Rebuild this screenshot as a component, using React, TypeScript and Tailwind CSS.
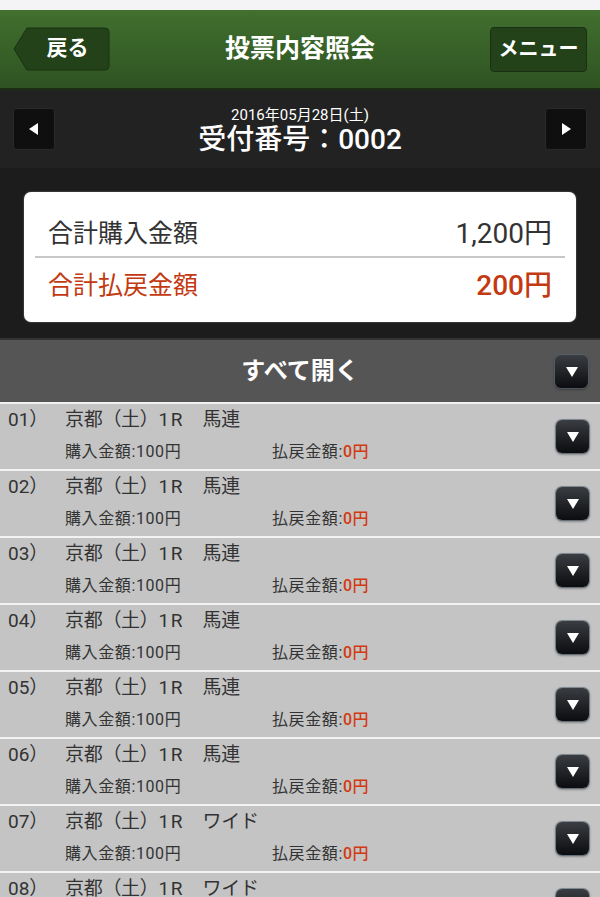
import React from "react";

const rows = [
  { no: "01", bet: "馬連" },
  { no: "02", bet: "馬連" },
  { no: "03", bet: "馬連" },
  { no: "04", bet: "馬連" },
  { no: "05", bet: "馬連" },
  { no: "06", bet: "馬連" },
  { no: "07", bet: "ワイド" },
  { no: "08", bet: "ワイド" },
];

const font = { fontFamily: '"Roboto", "Noto Sans CJK JP", sans-serif' };

const DownButton = () => (
  <div className="flex size-[33px] items-center justify-center rounded-[6px] bg-gradient-to-b from-[#3a3d42] to-[#0c0d10] shadow-[0_1px_3px_rgba(0,0,0,0.6)] ring-1 ring-[#5a6a7a]/60">
    <svg width="16" height="14" viewBox="0 0 16 14">
      <path d="M2 2h12L8 12z" fill="#fff" />
    </svg>
  </div>
);

const ArrowButton = ({ dir }: { dir: "left" | "right" }) => (
  <div className="flex h-[42px] w-[42px] items-center justify-center rounded-[4px] bg-[#0f0f0f] shadow-[inset_0_0_0_1px_#2a2a2a]">
    <svg width="14" height="14" viewBox="0 0 14 14">
      {dir === "left" ? <path d="M11 1v12L2 7z" fill="#fff" /> : <path d="M3 1v12l9-6z" fill="#fff" />}
    </svg>
  </div>
);

export default function App() {
  return (
    <div className="h-[897px] w-[600px] overflow-hidden bg-[#1c1c1c]" style={font}>
      <div className="h-[10px] bg-[#f4f4f6]" />
      {/* header */}
      <div className="flex h-[80px] items-center justify-between border-b-2 border-[#1e2e16] bg-gradient-to-b from-[#41702f] to-[#2f5322] px-[13px]">
        <div className="relative flex h-[44px] w-[97px] items-center justify-center">
          <svg className="absolute inset-0" width="97" height="44" viewBox="0 0 97 44">
            <path d="M14 1H92a4 4 0 0 1 4 4V39a4 4 0 0 1-4 4H14L1 22z" fill="#24421a" stroke="#1a3012" />
          </svg>
          <span className="relative pl-3 text-[21px] font-bold text-white">戻る</span>
        </div>
        <span className="text-[25px] font-bold text-white">投票内容照会</span>
        <div className="flex h-[45px] w-[97px] items-center justify-center rounded-[4px] border border-[#1a3012] bg-[#24421a]">
          <span className="text-[20px] font-bold text-white">メニュー</span>
        </div>
      </div>
      {/* number bar */}
      <div className="flex h-[78px] items-center justify-between bg-[#222222] px-[13px] shadow-[0_2px_3px_rgba(0,0,0,0.5)]">
        <ArrowButton dir="left" />
        <div className="flex flex-col items-center leading-none text-white">
          <span className="mt-[4px] text-[15px]">2016年05月28日(土)</span>
          <span className="mt-[3px] text-[28px] font-medium">受付番号：0002</span>
        </div>
        <ArrowButton dir="right" />
      </div>
      {/* totals */}
      <div className="bg-[#1c1c1c] px-[24px] pt-[24px] pb-[16px]">
        <div className="rounded-[7px] bg-white px-[11px] shadow-[0_0_2px_rgba(255,255,255,0.4)]">
          <div className="flex h-[66px] items-center justify-between border-b-2 border-[#c8c8c8] px-[13px] pt-[28px] pb-[8px] text-[#333]">
            <span className="text-[25px]">合計購入金額</span>
            <span className="text-[28px]">1,200円</span>
          </div>
          <div className="flex h-[64px] items-center justify-between px-[13px] pb-[8px] text-[#c33a12]">
            <span className="text-[25px]">合計払戻金額</span>
            <span className="text-[28px] font-medium">200円</span>
          </div>
        </div>
      </div>
      {/* open all */}
      <div className="relative flex h-[64px] items-center justify-center border-t-2 border-[#333] bg-[#555555]">
        <span className="text-[24px] font-bold text-white">すべて開く</span>
        <div className="absolute right-[12px] top-[15px]">
          <DownButton />
        </div>
      </div>
      {/* rows */}
      {rows.map((r) => (
        <div key={r.no} className="flex h-[67px] border-t-2 border-[#f2f2f2] bg-[#c4c4c4] pr-[11px]">
          <div className="flex-1 pt-[6px]">
            <div className="flex text-[19px] leading-none text-[#333]">
              <span className="w-[65px] pl-[8px]">{r.no}）</span>
              <span className="tracking-[-0.3px]">
                京都（土）<span className="tracking-[1.5px]">1R</span>　{r.bet}
              </span>
            </div>
            <div className="mt-[15px] flex pl-[65px] text-[16px] leading-none tracking-[0.6px] text-[#333]">
              <span className="w-[207px]">購入金額:100円</span>
              <span>
                払戻金額:<span className="font-medium text-[#d23a12]">0円</span>
              </span>
            </div>
          </div>
          <div className="self-center">
            <DownButton />
          </div>
        </div>
      ))}
    </div>
  );
}
